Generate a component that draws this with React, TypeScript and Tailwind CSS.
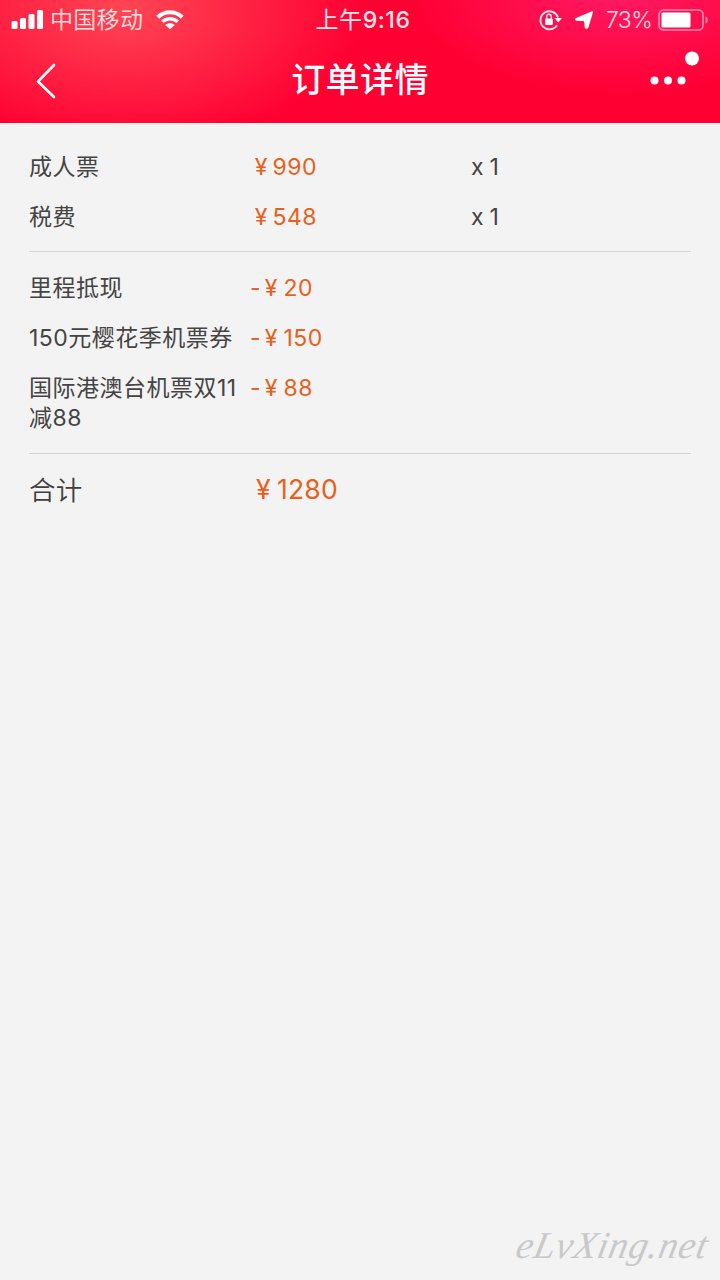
import { clsx } from "clsx";

interface PriceRow {
  label: string;
  price: string;
  count?: string;
  discount?: boolean;
}

const fares: PriceRow[] = [
  { label: "成人票", price: "990", count: "x 1" },
  { label: "税费", price: "548", count: "x 1" },
];

const discounts: PriceRow[] = [
  { label: "里程抵现", price: "20", discount: true },
  { label: "150元樱花季机票券", price: "150", discount: true },
  { label: "国际港澳台机票双11减88", price: "88", discount: true },
];

function StatusBar() {
  return (
    <div className="flex h-10 items-center justify-between pl-[11px] pr-[11px] text-[23px] leading-10 text-white/85">
      <div className="flex w-[240px] items-center">
        <svg className="h-5 w-8" viewBox="0 0 32 20" fill="white">
          <rect x="0.5" y="11" width="6" height="8" rx="1.5" />
          <rect x="9" y="8" width="6" height="11" rx="1.5" />
          <rect x="17.5" y="4" width="6" height="15" rx="1.5" />
          <rect x="26" y="0" width="6" height="19" rx="1.5" />
        </svg>
        <span className="ml-[7px] font-[350] tracking-[0.3px]">中国移动</span>
        <svg className="ml-[13px] h-5 w-7" viewBox="0 0 28 20" fill="none" stroke="white">
          <path d="M1.8 7.3C8.6 .7 19.4 .7 26.2 7.3" strokeWidth="4" />
          <path d="M6.3 11.8C10.6 7.7 17.4 7.7 21.7 11.8" strokeWidth="3.6" />
          <path d="M14 19.2L9.2 15C12 12.6 16 12.6 18.8 15Z" fill="white" stroke="none" />
        </svg>
      </div>
      <span className="pl-[6px] tracking-[0.6px] text-white/90">
        上午<span className="font-medium">9:16</span>
      </span>
      <div className="flex w-[240px] items-center justify-end">
        <svg className="h-[22px] w-6" viewBox="0 0 24 22" fill="none" stroke="white" strokeOpacity=".9">
          <path d="M18 16.2A9 9 0 1 1 19 8.5" strokeWidth="1.8" />
          <path d="M15.5 9h7.5l-3.8 4.6Z" fill="white" stroke="none" />
          <rect x="6.2" y="9.5" width="7.6" height="6.5" rx="1" fill="white" stroke="none" />
          <path d="M7.7 10V7.5a2.3 2.3 0 0 1 4.6 0V10" strokeWidth="1.4" />
        </svg>
        <svg className="ml-[12px] h-[18px] w-[18px]" viewBox="0 0 18 18" fill="white">
          <path d="M17 .3C17.8 0 18.2 .6 17.9 1.4L13.4 16.6C12.9 18.2 10 18.3 9.7 16.6L9.2 11.2C9.1 10.3 8.7 9.9 7.8 9.9L1.2 9.8C-.3 9.7-.3 7.7 1 7.1Z" />
        </svg>
        <span className="ml-[13px] font-light tracking-[-0.4px]">73%</span>
        <svg className="ml-[5.5px] h-[22px] w-[51px]" viewBox="0 0 51 22">
          <rect x="1" y="1" width="44" height="20" rx="4.5" fill="none" stroke="white" strokeOpacity=".5" strokeWidth="1.7" />
          <rect x="3.5" y="3.5" width="29" height="15" rx="1.5" fill="white" />
          <path d="M47.5 7.5c3 1 3 6 0 7Z" fill="white" fillOpacity=".5" />
        </svg>
      </div>
    </div>
  );
}

function Header() {
  return (
    <header className="h-[123px] bg-[#ff0033] bg-[radial-gradient(ellipse_240px_135px_at_125px_10px,#ff4654_0%,#ff465400_100%),radial-gradient(ellipse_210px_105px_at_620px_-10px,#ff1a66_0%,#ff1a6600_100%)]">
      <StatusBar />
      <div className="flex h-[78px] items-center justify-between pl-9 pr-[20px]">
        <svg className="mt-[3px] h-9 w-[100px]" viewBox="0 0 100 36" fill="none" stroke="white" strokeWidth="2.6" strokeLinecap="round" strokeLinejoin="round">
          <path d="M18 2L2 18.5L18 34" />
        </svg>
        <h1 className="pt-[1px] text-[34px] font-medium leading-none tracking-[0.4px] text-white">订单详情</h1>
        <svg className="h-[60px] w-[116px]" viewBox="0 0 116 60" fill="white">
          <circle cx="108" cy="9.5" r="7" />
          <circle cx="70.5" cy="31.5" r="4" />
          <circle cx="84" cy="31.5" r="4" />
          <circle cx="97.5" cy="31.5" r="4" />
        </svg>
      </div>
    </header>
  );
}

function Row({ label, price, count, discount }: PriceRow) {
  return (
    <div className="flex leading-[30px]">
      <div className="w-[221px] text-[#444444]">{label}</div>
      <div className="flex w-[221px] text-[#e8601c]">
        {discount && <span className="w-[9px]">-</span>}
        <span className={clsx("text-center", discount ? "w-[24.5px]" : "w-[22.5px]")}>¥</span>
        {price}
      </div>
      {count && <div className="tracking-[-0.3px] text-[#444444]">{count}</div>}
    </div>
  );
}

export default function App() {
  return (
    <div className="flex h-[1280px] w-[720px] flex-col overflow-hidden bg-[#f3f3f3] font-['Inter','Noto_Sans_CJK_SC',sans-serif]">
      <Header />
      <main className="flex-1 px-[29px] text-[23px] tracking-[0.5px]">
        <section className="flex flex-col gap-5 border-b border-[#d4d4d4] pb-[19px] pt-[29px]">
          {fares.map((row) => (
            <Row key={row.label} {...row} />
          ))}
        </section>
        <section className="flex flex-col gap-5 border-b border-[#d4d4d4] pb-5 pt-[21px]">
          {discounts.map((row) => (
            <Row key={row.label} {...row} />
          ))}
        </section>
        <section className="flex pt-[18px] text-[26.5px] leading-[34px] tracking-[0.2px]">
          <div className="w-[221px] pt-px font-[350] text-[#3f3f3f]">合计</div>
          <div className="flex text-[#e8601c]">
            <span className="w-[27px] text-center">¥</span>
            1280
          </div>
        </section>
      </main>
      <footer className="flex justify-end pb-[10px] pr-3">
        <span className="-skew-x-12 font-['Liberation_Serif'] text-[38px] italic leading-[50px] tracking-[0.8px] text-[#c9c9c9]">
          eLvXing.net
        </span>
      </footer>
    </div>
  );
}
